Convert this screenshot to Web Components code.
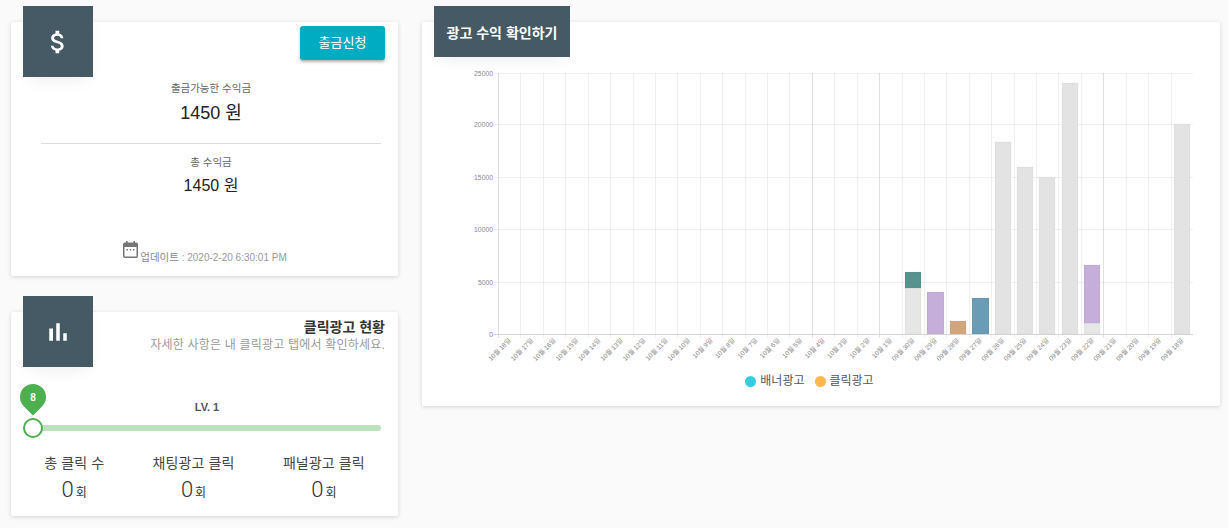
<!DOCTYPE html>
<html lang="ko">
<head>
<meta charset="utf-8">
<title>대시보드</title>
<style>
  html, body { margin: 0; height: 100%; }
  body {
    background: #fafafa;
    font-family: "Liberation Sans", "Noto Sans CJK KR", sans-serif;
    overflow: hidden;
  }
</style>
</head>
<body>
<app-dashboard>
  <div slot="left">
    <payout-panel></payout-panel>
    <click-panel></click-panel>
  </div>
  <revenue-panel slot="right"></revenue-panel>
</app-dashboard>

<script>
class AppDashboard extends HTMLElement {
  constructor() {
    super();
    this.attachShadow({ mode: "open" });
    this.shadowRoot.innerHTML = `
      <style>
        :host {
          display: grid;
          grid-template-columns: 387px 798px;
          column-gap: 24px;
          align-items: start;
          padding: 22px 0 0 11px;
        }
        ::slotted([slot="left"]) {
          display: flex;
          flex-direction: column;
          gap: 36px;
        }
      </style>
      <slot name="left"></slot>
      <slot name="right"></slot>
    `;
  }
}

class InfoCard extends HTMLElement {
  constructor() {
    super();
    this.attachShadow({ mode: "open" });
    this.shadowRoot.innerHTML = `
      <style>
        :host {
          display: block;
          background: #fff;
          border-radius: 2px;
          box-shadow: 0 1px 4px rgba(0, 0, 0, .16);
          color: #333;
        }
        .tile {
          float: left;
          margin: -16px 0 0 12px;
          background: #455a64;
          color: #fff;
          display: flex;
          align-items: center;
          justify-content: center;
          box-shadow: 0 8px 16px -6px rgba(0, 0, 0, .08);
        }
        .body::after { content: ""; display: block; clear: both; }
      </style>
      <div class="body">
        <div class="tile" part="tile"><slot name="tile"></slot></div>
        <slot></slot>
      </div>
    `;
  }

  connectedCallback() {
    const tile = this.shadowRoot.querySelector(".tile");
    tile.style.width = this.getAttribute("tile-width") + "px";
    tile.style.height = this.getAttribute("tile-height") + "px";
  }
}

class PayoutPanel extends HTMLElement {
  constructor() {
    super();
    this.attachShadow({ mode: "open" });
    this.shadowRoot.innerHTML = `
      <style>
        :host { display: block; }
        info-card { height: 254px; }
        svg { display: block; fill: #fff; }
        .top { display: flex; justify-content: flex-end; padding: 4px 13px 0 0; }
        button {
          width: 85px;
          height: 34px;
          border: 0;
          border-radius: 3px;
          background: #00acc1;
          color: #fff;
          font: 13px "Liberation Sans", "Noto Sans CJK KR", sans-serif;
          box-shadow: 0 2px 3px rgba(0, 0, 0, .3);
          padding: 0 0 3px;
        }
        .sums { clear: both; text-align: center; padding: 0 17px 0 30px; }
        .label { font-size: 10.5px; color: #666; line-height: 16px; }
        .big { font-size: 18px; color: #222; line-height: 24px; margin-top: 5px; }
        .mid { font-size: 16px; color: #222; line-height: 22px; margin-top: 5px; }
        hr { border: 0; border-top: 1px solid #ddd; margin: 18px 0 10px; }
        .updated {
          display: flex;
          justify-content: center;
          align-items: flex-end;
          margin-top: 44px;
          padding-right: 12px;
          color: #999;
          font-size: 10px;
          line-height: 13px;
        }
        .updated svg { fill: #757575; margin: 0 2px 6px 0; }
        .updated em { font-style: normal; font-size: 10.5px; color: #888; }
      </style>
      <info-card tile-width="70" tile-height="71">
        <svg slot="tile" width="30" height="30" viewBox="0 0 24 24"><path d="M11.8 10.9c-2.27-.59-3-1.2-3-2.15 0-1.09 1.01-1.85 2.7-1.85 1.78 0 2.44.85 2.5 2.1h2.21c-.07-1.72-1.12-3.3-3.21-3.81V3h-3v2.16c-1.94.42-3.5 1.68-3.5 3.61 0 2.31 1.91 3.46 4.7 4.13 2.5.6 3 1.48 3 2.41 0 .69-.49 1.79-2.7 1.79-2.06 0-2.87-.92-2.98-2.1h-2.2c.12 2.19 1.76 3.42 3.68 3.83V21h3v-2.15c1.95-.37 3.5-1.5 3.5-3.55 0-2.84-2.43-3.81-4.7-4.4z"/></svg>
        <div class="top"><button>출금신청</button></div>
        <div class="sums">
          <div class="label" style="margin-top:20px">출금가능한 수익금</div>
          <div class="big">1450 원</div>
          <hr>
          <div class="label">총 수익금</div>
          <div class="mid">1450 원</div>
          <div class="updated">
            <svg width="15" height="17" viewBox="0 0 15 17"><path fill-rule="evenodd" d="M3 0h1.6v1.6h5.8V0H12v1.6h1.2A1.8 1.8 0 0 1 15 3.4v11.8a1.8 1.8 0 0 1-1.8 1.8H1.8A1.8 1.8 0 0 1 0 15.200V3.400A1.800 1.800 0 0 1 1.800 1.600H3zM1.500 6v9.500h12V6zM3.500 8h1.500v1.500H3.500zm3.250 0h1.500v1.500h-1.500zM10 8h1.500v1.500H10z"/></svg>
            <span><em>업데이트</em> : 2020-2-20 6:30:01 PM</span>
          </div>
        </div>
      </info-card>
    `;
  }
}

class LevelSlider extends HTMLElement {
  constructor() {
    super();
    this.attachShadow({ mode: "open" });
    this.shadowRoot.innerHTML = `
      <style>
        :host { display: block; position: relative; height: 39px; margin: 0 17px 0 22px; }
        .level {
          text-align: center;
          font-size: 11px;
          font-weight: bold;
          color: #555;
          line-height: 14px;
        }
        .track {
          position: absolute;
          left: 0; right: 0; top: 25px;
          height: 6px;
          border-radius: 3px;
          background: #bde0bd;
        }
        .thumb {
          position: absolute;
          left: -10px; top: 18px;
          box-sizing: border-box;
          width: 20px; height: 20px;
          border-radius: 50%;
          border: 2px solid #4caf50;
          background: #fff;
        }
        .pin {
          position: absolute;
          left: -13px; top: -16px;
          width: 26px; height: 26px;
          display: flex;
          align-items: center;
          justify-content: center;
          color: #fff;
          font-size: 10px;
          font-weight: bold;
        }
        .pin::before {
          content: "";
          position: absolute;
          inset: 0;
          background: #4caf50;
          border-radius: 50% 50% 0 50%;
          transform: rotate(45deg);
        }
        .pin span { position: relative; }
      </style>
      <div class="level"><slot></slot></div>
      <div class="track"></div>
      <div class="pin"><span>8</span></div>
      <div class="thumb"></div>
    `;
  }
}

class StatItem extends HTMLElement {
  constructor() {
    super();
    this.attachShadow({ mode: "open" });
    this.shadowRoot.innerHTML = `
      <style>
        :host { display: block; text-align: center; }
        .name { font-size: 14px; line-height: 18px; color: #444; letter-spacing: .1px; }
        .val { margin-top: 5px; font-size: 12px; line-height: 24px; color: #333; }
        .val b { font: 300 22px Roboto, "Liberation Sans", sans-serif; color: #333; margin-right: 2px; }
      </style>
      <div class="name"><slot></slot></div>
      <div class="val"><b>0</b>회</div>
    `;
  }
}

class ClickPanel extends HTMLElement {
  constructor() {
    super();
    this.attachShadow({ mode: "open" });
    this.shadowRoot.innerHTML = `
      <style>
        :host { display: block; }
        info-card { height: 204px; }
        svg { display: block; fill: #fff; }
        .head { text-align: right; padding: 6px 13px 0 0; }
        .title { font-size: 14px; font-weight: bold; color: #333; line-height: 18px; }
        .sub { font-size: 12px; color: #999; line-height: 18px; letter-spacing: .2px; }
        .gap { clear: both; height: 33px; }
        .stats {
          display: flex;
          justify-content: space-around;
          padding: 0 9px;
          margin-top: 15px;
        }
      </style>
      <info-card tile-width="70" tile-height="71">
        <svg slot="tile" width="30" height="30" viewBox="0 0 24 24"><path d="M5 9.2h3V19H5zM10.6 5h2.8v14h-2.8zm5.6 8H19v6h-2.8z"/></svg>
        <div class="head">
          <div class="title">클릭광고 현황</div>
          <div class="sub">자세한 사항은 내 클릭광고 탭에서 확인하세요.</div>
        </div>
        <div class="gap"></div>
        <level-slider>LV. 1</level-slider>
        <div class="stats">
          <stat-item>총 클릭 수</stat-item>
          <stat-item>채팅광고 클릭</stat-item>
          <stat-item>패널광고 클릭</stat-item>
        </div>
      </info-card>
    `;
  }
}

class RevenueChart extends HTMLElement {
  constructor() {
    super();
    this.attachShadow({ mode: "open" });
    const labels = [];
    for (let d = 18; d >= 1; d--) labels.push("10월 " + d + "일");
    for (let d = 30; d >= 18; d--) labels.push("09월 " + d + "일");

    // canvas origin is the chart card's top-left corner
    const ox = 422, oy = 22;
    const left = 498, right = 1193, top = 73, base = 334;
    const step = (right - left) / labels.length;
    let s = "";

    for (const y of [73, 124, 177, 229, 282]) {
      s += `<line x1="${left - ox - 4}" x2="${right - ox}" y1="${y - oy + .5}" y2="${y - oy + .5}" stroke="rgba(0,0,0,.06)"/>`;
    }
    const dark = [812, 879, 1103, 1170];
    for (let i = 1; i < labels.length; i++) {
      const x = Math.round(left + step * i);
      const c = dark.includes(x) ? "rgba(0,0,0,.12)" : "rgba(0,0,0,.06)";
      s += `<line x1="${x - ox + .5}" x2="${x - ox + .5}" y1="${top - oy}" y2="${base - oy + 4}" stroke="${c}"/>`;
    }

    // [left x, width, top y, bottom y, colour]
    const bars = [
      [905, 16, 288, 334, "#e6e6e6"],
      [905, 16, 272, 288, "#58928f"],
      [927, 17, 292, 334, "#c5aeda"],
      [950, 16, 321, 334, "#d1a67f"],
      [972, 17, 298, 334, "#6b9cb5"],
      [995, 16, 142, 334, "#e3e3e3"],
      [1017, 16, 167, 334, "#e3e3e3"],
      [1039, 16, 177, 334, "#e3e3e3"],
      [1062, 16, 83, 334, "#e3e3e3"],
      [1084, 16, 323, 334, "#e6e6e6"],
      [1084, 16, 265, 323, "#c5aeda"],
      [1174, 16, 124, 334, "#e3e3e3"]
    ];
    for (const [x, w, y1, y2, c] of bars) {
      s += `<rect x="${x - ox}" y="${y1 - oy}" width="${w}" height="${y2 - y1}" fill="${c}" stroke="rgba(0,0,0,.03)"/>`;
    }

    s += `<line x1="${left - ox + .5}" x2="${left - ox + .5}" y1="${top - oy}" y2="${base - oy + 4}" stroke="#ddd"/>`;
    s += `<line x1="${left - ox - 4}" x2="${right - ox}" y1="${base - oy + .5}" y2="${base - oy + .5}" stroke="#d4d4d4"/>`;

    [[25000, 73], [20000, 124], [15000, 177], [10000, 229], [5000, 282], [0, 334]].forEach(([v, y]) => {
      s += `<text class="tick" x="${493 - ox}" y="${y - oy + 2.5}" text-anchor="end">${v}</text>`;
    });
    labels.forEach((t, i) => {
      const x = left + step * (i + .5) + 2 - ox, y = 341 - oy;
      s += `<text class="tick day" transform="translate(${x} ${y}) rotate(-45)" text-anchor="end">${t}</text>`;
    });

    this.shadowRoot.innerHTML = `
      <style>
        :host { position: absolute; left: 0; top: 0; display: block; width: 798px; height: 350px; }
        svg { display: block; }
        .tick { font: 6.8px "Liberation Sans", "Noto Sans CJK KR", sans-serif; fill: #888; }
        .day { font-size: 6.6px; }
      </style>
      <svg width="798" height="350">${s}</svg>
    `;
  }
}

class RevenuePanel extends HTMLElement {
  constructor() {
    super();
    this.attachShadow({ mode: "open" });
    this.shadowRoot.innerHTML = `
      <style>
        :host { display: block; }
        info-card { height: 384px; position: relative; }
        .title {
          font-size: 14px;
          font-weight: bold;
          white-space: nowrap;
        }
        .legend {
          position: absolute;
          left: 0; right: 0; top: 350px;
          display: flex;
          justify-content: center;
          gap: 10px;
          font-size: 12px;
          color: #555;
          line-height: 18px;
          padding-right: 23px;
        }
        .legend span { display: flex; align-items: center; gap: 4px; }
        .legend i { width: 11px; height: 11px; border-radius: 50%; }
      </style>
      <info-card tile-width="136" tile-height="51">
        <span class="title" slot="tile">광고 수익 확인하기</span>
        <revenue-chart></revenue-chart>
        <div class="legend">
          <span><i style="background:#36cbdf"></i>배너광고</span>
          <span><i style="background:#ffb64d"></i>클릭광고</span>
        </div>
      </info-card>
    `;
  }
}

customElements.define("app-dashboard", AppDashboard);
customElements.define("info-card", InfoCard);
customElements.define("payout-panel", PayoutPanel);
customElements.define("level-slider", LevelSlider);
customElements.define("stat-item", StatItem);
customElements.define("click-panel", ClickPanel);
customElements.define("revenue-chart", RevenueChart);
customElements.define("revenue-panel", RevenuePanel);
</script>
</body>
</html>
